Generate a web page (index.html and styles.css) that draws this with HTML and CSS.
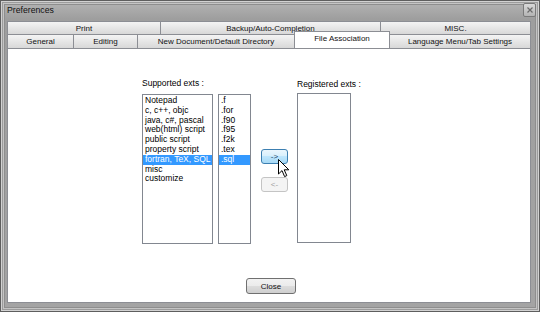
FILE: index.html
```html
<!DOCTYPE html>
<html lang="en">
<head>
    <meta charset="UTF-8">
    <title>Preferences</title>
    <link rel="stylesheet" href="styles.css">
</head>
<body>

    <div class="window">
        <div class="titlebar">
            <span class="title">Preferences</span>
            <span class="close-x">
                <svg width="6" height="6" viewBox="0 0 6 6"><path d="M0.5 0.5 L5.5 5.5 M5.5 0.5 L0.5 5.5" stroke="#6b6b6b" stroke-width="1.2"/></svg>
            </span>
        </div>
        <div class="client">
            <div class="tab-row row-top">
                <div class="tab tab-print">Print</div>
                <div class="tab tab-backup">Backup/Auto-Completion</div>
                <div class="tab tab-misc">MISC.</div>
            </div>
            <div class="tab-row row-bottom">
                <div class="tab tab-general">General</div>
                <div class="tab tab-editing">Editing</div>
                <div class="tab tab-newdoc">New Document/Default Directory</div>
                <div class="tab tab-assoc active">File Association</div>
                <div class="tab tab-lang">Language Menu/Tab Settings</div>
            </div>
            <div class="panel">
                <div class="assoc">
                    <div class="group">
                        <div class="label">Supported exts :</div>
                        <div class="lists">
                            <ul class="listbox list-langs">
                                <li>Notepad</li>
                                <li>c, c++, objc</li>
                                <li>java, c#, pascal</li>
                                <li>web(html) script</li>
                                <li>public script</li>
                                <li>property script</li>
                                <li class="selected">fortran, TeX, SQL</li>
                                <li>misc</li>
                                <li>customize</li>
                            </ul>
                            <ul class="listbox list-exts">
                                <li>.f</li>
                                <li>.for</li>
                                <li>.f90</li>
                                <li>.f95</li>
                                <li>.f2k</li>
                                <li>.tex</li>
                                <li class="selected">.sql</li>
                            </ul>
                        </div>
                    </div>
                    <div class="moves">
                        <button class="btn btn-hot">-&gt;</button>
                        <button class="btn btn-off">&lt;-</button>
                        <svg class="cursor" width="12" height="19" viewBox="0 0 12 19">
                            <path d="M0.5 0.5 L0.5 15 L4 11.6 L6.6 17.6 L8.8 16.6 L6.2 10.8 L10.8 10.8 Z" fill="#fff" stroke="#000" stroke-width="1" stroke-linejoin="round"/>
                        </svg>
                    </div>
                    <div class="group group-reg">
                        <div class="label">Registered exts :</div>
                        <ul class="listbox list-reg"></ul>
                    </div>
                </div>
                <div class="footer">
                    <button class="btn btn-close">Close</button>
                </div>
            </div>
        </div>
    </div>

</body>
</html>
```

FILE: styles.css
```css
body {
    margin: 0;
    font-family: "Liberation Sans", Arial, sans-serif;
    color: #000;
    overflow: hidden;
}
.window {
    width: 540px;
    height: 312px;
    box-sizing: border-box;
    border: 1px solid #5e5e5e;
    background: linear-gradient(to bottom, #b5b5b5, #9e9e9e 18px, #a4a4a4);
    box-shadow: inset 0 0 0 1px #d2d2d2, inset 0 0 0 2px #9c9c9c, inset 0 0 0 3px #c4c4c4, inset 0 0 0 4px #8e8e8e;
    padding: 0 8px 8px 6px;
    display: flex;
    flex-direction: column;
}
.titlebar {
    height: 20px;
    display: flex;
    align-items: flex-start;
    justify-content: space-between;
    margin-right: -5px;
}
.title {
    font-size: 8.7px;
    line-height: 10px;
    margin-top: 4px;
    color: #111;
}
.close-x {
    width: 11px;
    height: 12px;
    margin-top: 2px;
    border: 1px solid #7a7a7a;
    border-radius: 2px;
    background: linear-gradient(to bottom, #d8d8d8, #b4b4b4);
    display: flex;
    align-items: center;
    justify-content: center;
}
.client {
    flex: 1;
    display: flex;
    flex-direction: column;
    background: #fff;
}
.tab-row {
    display: flex;
    position: relative;
}
.row-top {
    height: 13px;
}
.row-bottom {
    height: 14px;
}
.tab {
    flex: none;
    box-sizing: border-box;
    border: 1px solid #8c8e94;
    border-bottom: none;
    margin-right: -1px;
    background: linear-gradient(to bottom, #f4f4f4, #e6e6e6 50%, #d8d8d8);
    font-size: 8px;
    text-align: center;
    white-space: nowrap;
    display: flex;
    align-items: center;
    justify-content: center;
    color: #111;
}
.tab-print { width: 154px; }
.tab-backup { width: 221px; }
.tab-misc { width: 151px; }
.tab-general { width: 67px; }
.tab-editing { width: 65px; }
.tab-newdoc { width: 158px; }
.tab-assoc { width: 96px; }
.tab-lang { width: 142px; }
.tab.active {
    background: #fff;
    height: 17px;
    margin-top: -3px;
    padding-bottom: 3px;
    position: relative;
    z-index: 1;
}
.panel {
    flex: 1;
    background: #fff;
    border: 1px solid #8c8e94;
    display: flex;
    flex-direction: column;
}
.assoc {
    display: flex;
    padding: 29px 0 0 134px;
}
.label {
    font-size: 8.5px;
    line-height: 10px;
    margin-bottom: 6px;
    white-space: nowrap;
}
.lists {
    display: flex;
    gap: 5px;
}
.listbox {
    margin: 0;
    padding: 1px 0 0 0;
    list-style: none;
    box-sizing: border-box;
    height: 150px;
    border: 1px solid #828790;
    background: #fff;
    font-size: 8.5px;
    line-height: 9.8px;
}
.listbox li {
    padding-left: 2px;
    white-space: nowrap;
}
.listbox li.selected {
    background: #3399ff;
    color: #fff;
}
.list-langs { width: 71px; }
.list-exts { width: 33px; }
.list-reg { width: 54px; }
.group-reg .label {
    margin-top: 1px;
    margin-bottom: 4px;
}
.moves {
    position: relative;
    display: flex;
    flex-direction: column;
    gap: 13px;
    margin: 71px 9px 0 10px;
}
.btn {
    font-family: "Liberation Sans", Arial, sans-serif;
    font-size: 8px;
    padding: 0;
    border-radius: 3px;
    box-sizing: border-box;
    color: #222;
}
.moves .btn {
    width: 27px;
    height: 15px;
}
.btn-hot {
    border: 1px solid #3c7fb1;
    background: linear-gradient(to bottom, #eaf6fd, #d9f0fc 45%, #bee6fd 50%, #a7d9f5);
    color: #1c3f66;
}
.btn-off {
    border: 1px solid #c4c4c4;
    background: #f4f4f4;
    color: #a0a0a0;
}
.cursor {
    position: absolute;
    left: 17px;
    top: 10px;
}
.footer {
    margin-top: auto;
    display: flex;
    justify-content: center;
    padding: 0 0 8px 4px;
}
.btn-close {
    width: 50px;
    height: 16px;
    border: 1px solid #707070;
    background: linear-gradient(to bottom, #f2f2f2, #ebebeb 50%, #dddddd 50%, #cfcfcf);
    color: #111;
}
```
